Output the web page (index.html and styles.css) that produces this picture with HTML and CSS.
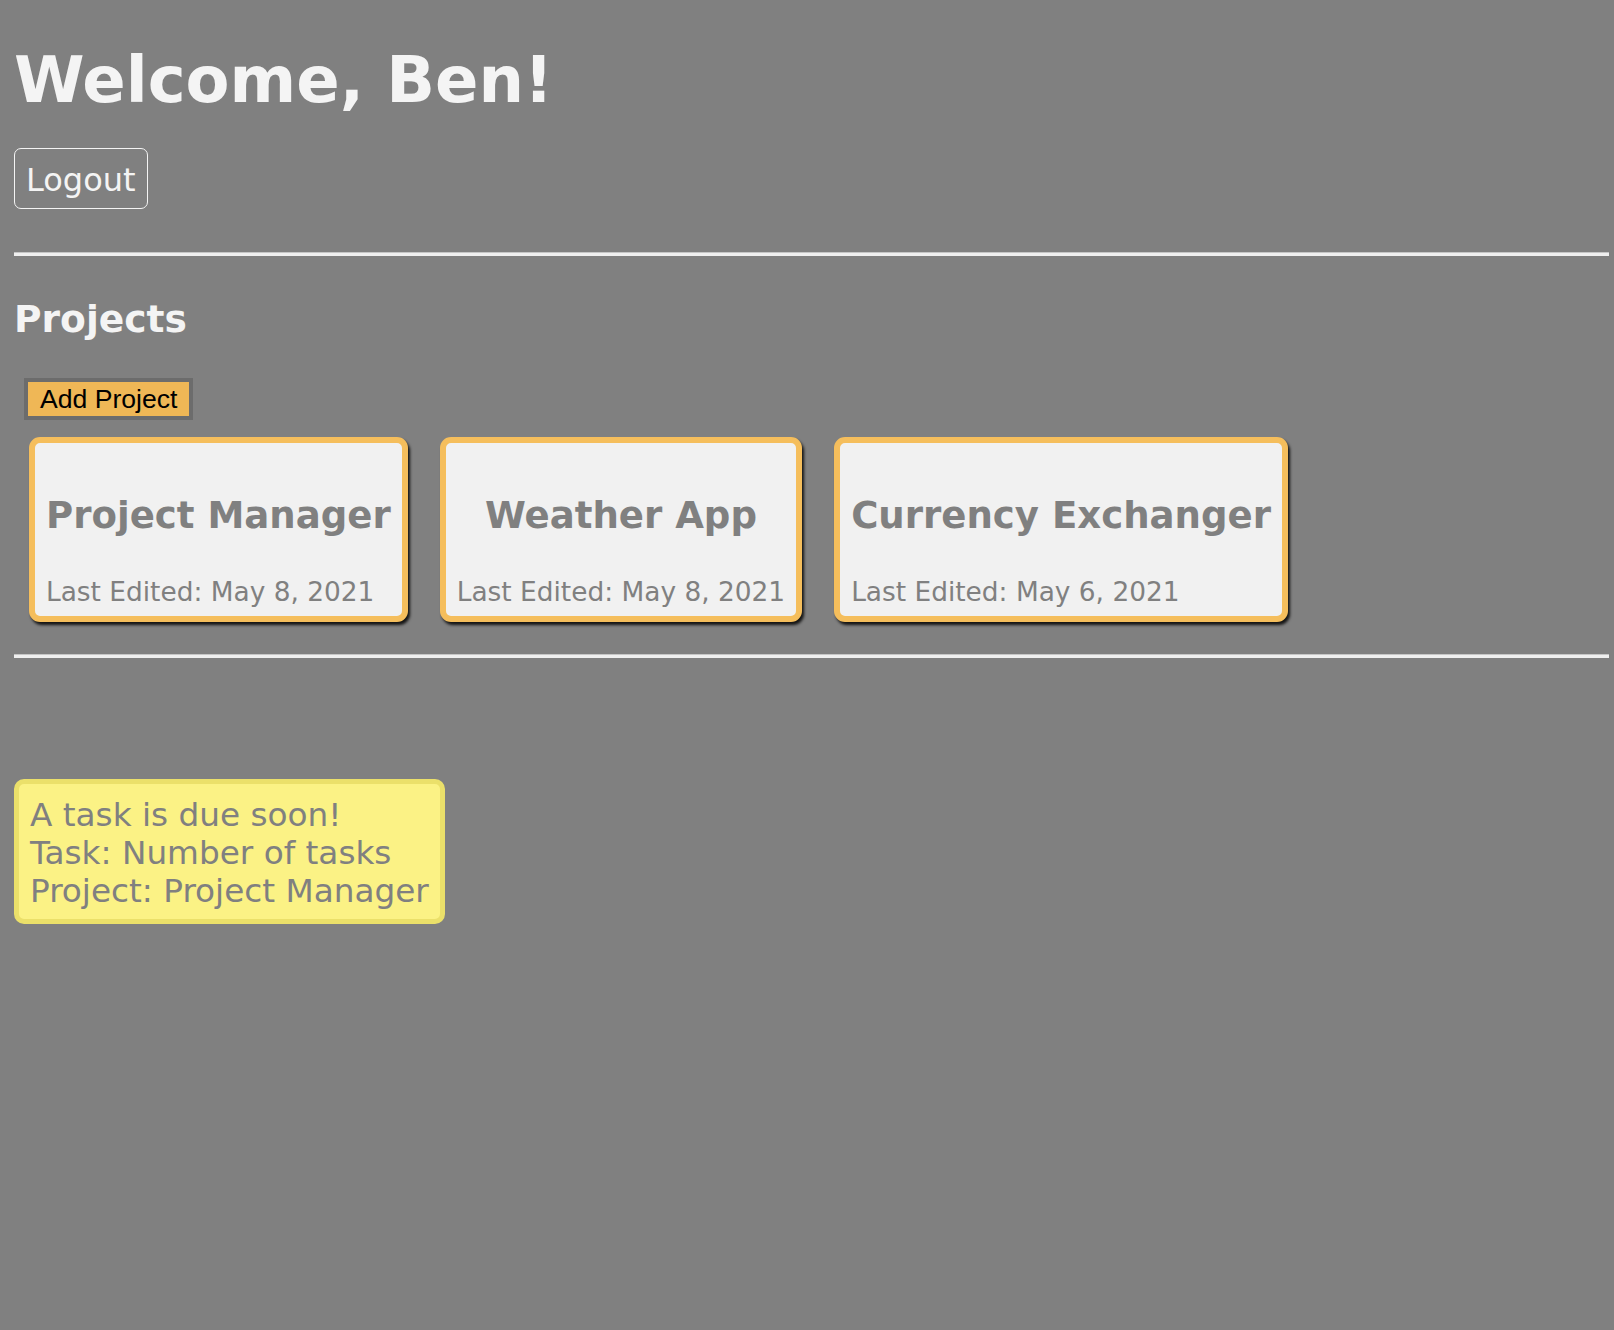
FILE: index.html
```html
<!DOCTYPE html>
<html lang="en">
<head>
<meta charset="utf-8">
<title>Dashboard</title>
<link rel="stylesheet" href="styles.css">
</head>
<body>
  <header class="top">
    <h1 class="welcome">Welcome, Ben!</h1>
    <button class="logout">Logout</button>
  </header>
  <hr class="rule rule-top">
  <section class="projects">
    <h2 class="projects-title">Projects</h2>
    <button class="add-project">Add Project</button>
    <div class="cards">
      <div class="card">
        <h3 class="card-title">Project Manager</h3>
        <p class="card-date">Last Edited: May 8, 2021</p>
      </div>
      <div class="card">
        <h3 class="card-title">Weather App</h3>
        <p class="card-date">Last Edited: May 8, 2021</p>
      </div>
      <div class="card">
        <h3 class="card-title">Currency Exchanger</h3>
        <p class="card-date">Last Edited: May 6, 2021</p>
      </div>
    </div>
  </section>
  <hr class="rule rule-bottom">
  <div class="notice">
    A task is due soon!<br>
    Task: Number of tasks<br>
    Project: Project Manager
  </div>
</body>
</html>
```

FILE: styles.css
```css
html, body {
  background: #808080;
}
body {
  margin: 0;
  padding: 0 5px 40px 14px;
  font-family: "DejaVu Sans", Verdana, sans-serif;
  color: #f4f4f4;
}
.welcome {
  margin: 43px 0 31px;
  font-size: 64px;
  line-height: 74px;
  font-weight: bold;
  color: #f4f4f4;
}
.logout {
  display: block;
  margin: 0;
  padding: 13px 11px 9px;
  border: 1px solid #f4f4f4;
  border-radius: 7px;
  background: transparent;
  color: #f4f4f4;
  font-family: "DejaVu Sans", Verdana, sans-serif;
  font-size: 32px;
  line-height: 37px;
}
.rule {
  height: 0;
  margin: 0;
  border: 0;
  border-top: 1px solid #c6c6c6;
  border-bottom: 3px solid #efefef;
}
.rule-top {
  margin-top: 43px;
}
.projects-title {
  margin: 42px 0 37px;
  font-size: 37.6px;
  line-height: 43px;
  font-weight: bold;
  color: #f4f4f4;
}
.add-project {
  display: block;
  margin: 0 0 0 10px;
  padding: 2px 12px;
  border: 4px solid #6c6c6c;
  background: #efb756;
  color: #000;
  font-family: "Liberation Sans", Arial, sans-serif;
  font-size: 26.6px;
  line-height: 30px;
}
.cards {
  display: flex;
  align-items: flex-start;
  gap: 32px;
  margin: 17px 0 32px 15px;
}
.card {
  padding: 10px 11px 9px;
  border: 6px solid #f5be5c;
  border-radius: 11px;
  background: #f1f1f1;
  box-shadow: 2px 3px 3px rgba(0, 0, 0, 0.85);
  color: #808080;
}
.card-title {
  margin: 41px 0 40px;
  text-align: center;
  font-size: 37.1px;
  line-height: 43px;
  font-weight: bold;
  white-space: nowrap;
}
.card-date {
  margin: 0;
  font-size: 26.4px;
  line-height: 30px;
  white-space: nowrap;
}
.notice {
  display: inline-block;
  margin-top: 121px;
  padding: 12px 11px 9px 11px;
  border: 5px solid #ebe06a;
  border-radius: 10px;
  background: #fbf285;
  color: #808080;
  font-size: 32.7px;
  line-height: 38px;
}
```
